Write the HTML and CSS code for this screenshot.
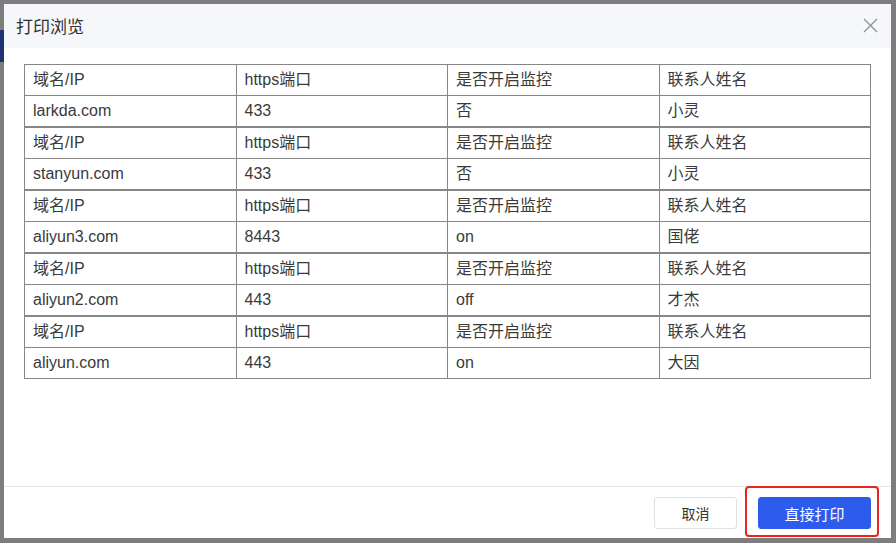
FILE: index.html
```html
<!DOCTYPE html>
<html lang="zh">
<head>
<meta charset="utf-8">
<title>打印浏览</title>
<link rel="stylesheet" href="styles.css">
</head>
<body>
<div class="page">
  <div class="edge-blue"></div>
  <div class="dialog">
    <div class="dlg-header">
      <span class="dlg-title">打印浏览</span>
      <svg class="dlg-close" width="15" height="15" viewBox="0 0 15 15"><path d="M1 1 L14 14 M14 1 L1 14" stroke="#909399" stroke-width="1.4" fill="none"/></svg>
    </div>
    <div class="dlg-body">
      <table class="grp"><tr><td>域名/IP</td><td>https端口</td><td>是否开启监控</td><td>联系人姓名</td></tr><tr><td>larkda.com</td><td>433</td><td>否</td><td>小灵</td></tr></table>
      <table class="grp"><tr><td>域名/IP</td><td>https端口</td><td>是否开启监控</td><td>联系人姓名</td></tr><tr><td>stanyun.com</td><td>433</td><td>否</td><td>小灵</td></tr></table>
      <table class="grp"><tr><td>域名/IP</td><td>https端口</td><td>是否开启监控</td><td>联系人姓名</td></tr><tr><td>aliyun3.com</td><td>8443</td><td>on</td><td>国佬</td></tr></table>
      <table class="grp"><tr><td>域名/IP</td><td>https端口</td><td>是否开启监控</td><td>联系人姓名</td></tr><tr><td>aliyun2.com</td><td>443</td><td>off</td><td>才杰</td></tr></table>
      <table class="grp"><tr><td>域名/IP</td><td>https端口</td><td>是否开启监控</td><td>联系人姓名</td></tr><tr><td>aliyun.com</td><td>443</td><td>on</td><td>大因</td></tr></table>
    </div>
    <div class="dlg-footer">
      <button class="btn btn-cancel">取消</button>
      <div class="primary-wrap">
        <button class="btn btn-primary">直接打印</button>
        <div class="highlight"></div>
      </div>
    </div>
  </div>
</div>
</body>
</html>
```
FILE: styles.css
```css
html, body {
  margin: 0;
  padding: 0;
}
body {
  background: #7d7d7d;
  font-family: "Liberation Sans", "Noto Sans CJK SC", sans-serif;
  width: 896px;
  height: 543px;
  overflow: hidden;
}
.page {
  position: relative;
  width: 896px;
  height: 543px;
  padding: 4px 0 0 4px;
  box-sizing: border-box;
}
.edge-blue {
  position: absolute;
  left: 0;
  top: 30px;
  width: 4px;
  height: 32px;
  background: #1e3472;
}
.dialog {
  width: 887px;
  height: 534px;
  background: #ffffff;
  display: flex;
  flex-direction: column;
}
.dlg-header {
  height: 44px;
  background: #f5f7fa;
  display: flex;
  align-items: center;
  justify-content: space-between;
  padding: 0 13px 0 12px;
  flex: none;
}
.dlg-title {
  font-size: 17px;
  color: #303133;
  font-family: "Noto Sans CJK SC", sans-serif;
  margin-top: -2px;
}
.dlg-close {
  display: block;
  margin-top: -1px;
}
.dlg-body {
  flex: 1;
  padding: 16px 20px 0 20px;
}
.grp {
  width: 847px;
  border-collapse: collapse;
  table-layout: fixed;
  border: 1px solid #868686;
}
.grp td {
  border: 1px solid #868686;
  height: 30px;
  padding: 0 0 0 8px;
  font-size: 16px;
  color: #3a3a3a;
  box-sizing: border-box;
  line-height: 30px;
  white-space: nowrap;
}
.dlg-footer {
  flex: none;
  height: 52px;
  border-top: 1px solid #e4e7ed;
  display: flex;
  justify-content: flex-end;
  align-items: flex-start;
  padding: 10px 20px 0 0;
  box-sizing: border-box;
  gap: 21px;
}
.btn {
  height: 32px;
  font-size: 14px;
  font-family: "Noto Sans CJK SC", sans-serif;
  border-radius: 3px;
  cursor: pointer;
  padding: 0;
}
.btn-cancel {
  width: 83px;
  background: #ffffff;
  border: 1px solid #dcdfe6;
  color: #333333;
}
.primary-wrap {
  position: relative;
}
.btn-primary {
  width: 113px;
  background: #2d5ced;
  border: 1px solid #2d5ced;
  color: #ffffff;
  display: block;
  font-size: 15px;
}
.highlight {
  position: absolute;
  left: -13px;
  top: -11px;
  width: 134px;
  height: 51px;
  border: 2px solid #e8261f;
  border-radius: 4px;
  box-sizing: border-box;
}
```
